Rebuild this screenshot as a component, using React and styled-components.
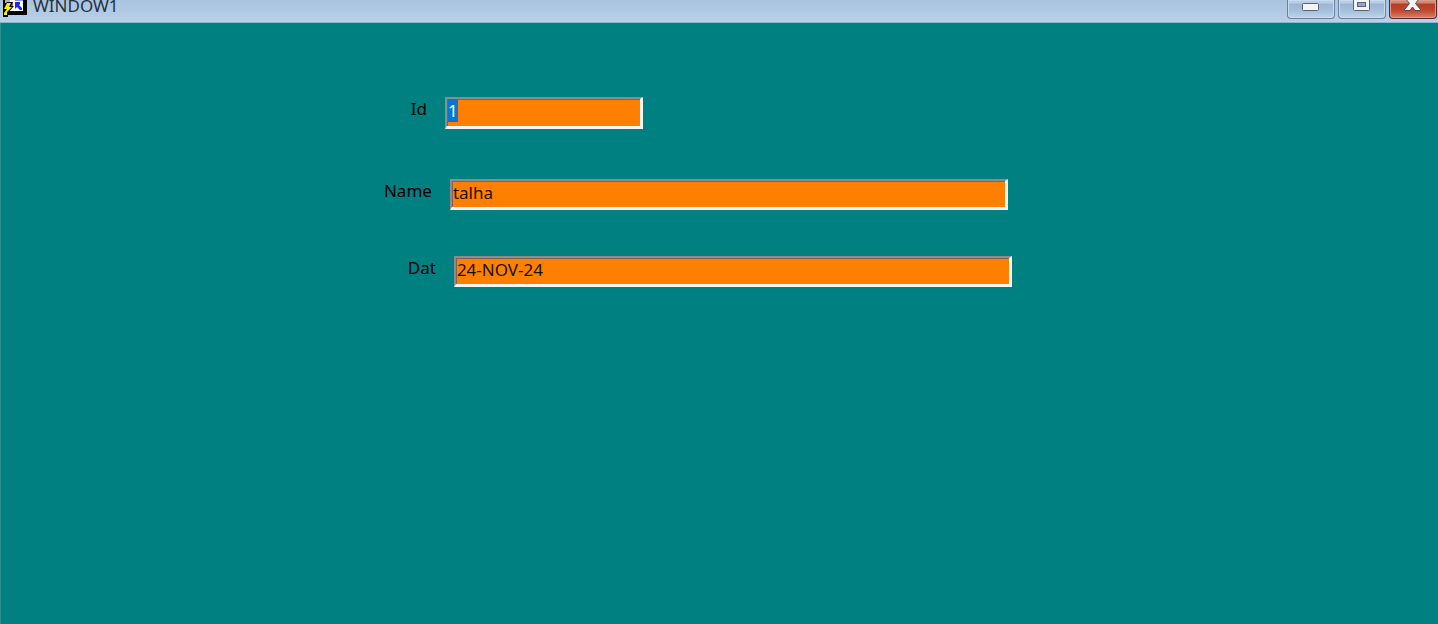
import React, { useEffect, useRef } from "react";
import styled, { createGlobalStyle } from "styled-components";

const GlobalStyle = createGlobalStyle`
  * { box-sizing: border-box; }
  body {
    margin: 0;
    background: #008080;
    color: #000;
    font-family: "Noto Sans", "Open Sans", sans-serif;
    font-size: 17px;
  }
`;

const Window = styled.div`
  min-height: 100vh;
  display: flex;
  flex-direction: column;
  background: #008080;
`;

const TitleBar = styled.header`
  height: 23px;
  display: flex;
  align-items: flex-start;
  justify-content: space-between;
  overflow: hidden;
  background: linear-gradient(#a9c2de, #b9d1ea);
  border-bottom: 1px solid #8fb5c9;
`;

const Caption = styled.div`
  display: flex;
  align-items: flex-start;
  gap: 6px;
  padding-left: 2px;
`;

const Title = styled.h1`
  margin: 0;
  font-size: 17px;
  font-weight: 400;
  line-height: 12px;
  color: #26303c;
`;

const Controls = styled.div`
  display: flex;
  gap: 3px;
  padding-right: 1px;
`;

const ControlButton = styled.button`
  width: 48px;
  height: 19px;
  padding: 0;
  display: flex;
  justify-content: center;
  border: 1px solid ${(p) => (p.$close ? "#5c2430" : "#6c7f9b")};
  border-top: 0;
  border-radius: 0 0 4px 4px;
  background: ${(p) =>
    p.$close
      ? "linear-gradient(#d08a7c 0 3px, #b73c22 4px, #c04a30 11px, #d98367)"
      : "linear-gradient(#b9cee6 0 3px, #9bb6d3 4px, #a6c0dc 11px, #bdd4ec)"};
  box-shadow: inset 0 0 0 1px ${(p) => (p.$close ? "#dd9b8b" : "#c8dbef")};

  svg { display: block; }
`;

const Form = styled.form`
  flex: 1;
  display: flex;
  flex-direction: column;
  padding: 74px 16px 16px 26%;
  border-left: 1px solid #2b9292;
`;

const Row = styled.div`
  display: flex;
  align-items: flex-start;
  gap: 18px;
  padding-left: ${(p) => p.$indent}px;
  margin-bottom: ${(p) => p.$space}px;
`;

const Label = styled.label`
  width: 52px;
  flex: none;
  text-align: right;
  line-height: 23px;
`;

const Field = styled.input`
  width: ${(p) => (p.$short ? 198 : 558)}px;
  min-width: 0;
  height: ${(p) => (p.$short ? 32 : 31)}px;
  padding: 0 0 ${(p) => (p.$short ? 4 : 3)}px 1px;
  border: solid;
  border-width: 2px 3px 3px 2px;
  border-color: #8c8c8c #f4f4f4 #f4f4f4 #8c8c8c;
  border-radius: 0;
  outline: 0;
  background: #ff8000;
  box-shadow: inset 1px 1px #806450;
  color: #1c1000;
  font: inherit;
  line-height: 23px;

  &::selection {
    background: rgba(0, 120, 215, 0.99);
    color: #fff;
  }
`;

const AppIcon = () => (
  <svg width="25" height="17" viewBox="0 0 25 17" aria-hidden="true">
    <path d="M1 0h24v15H1z" fill="#000" />
    <path d="M7 0h14v11H7z" fill="#fff" />
    <path d="M3 0h5v3H3z" fill="#b0b0c8" />
    <path d="M9 2h2v5H9z" fill="#e84860" />
    <path d="M13 0h8v1h-8z" fill="#7f90f0" />
    <path d="M13 2h5v2l-1 1 3 3v2h-2l-3-3-2 2z" fill="#1428ff" />
    <path d="M5 2h6L9 6h3L6 13v4H1v-4l2-3H1V7z" fill="#000" />
    <path d="M5 3h4L7 7h3l-5 5v3H2v-2l3-4H2z" fill="#f4ee18" />
  </svg>
);

const MinimizeIcon = () => (
  <svg width="18" height="14" viewBox="0 0 18 14" aria-hidden="true">
    <rect x="0.5" y="3.5" width="16" height="7" rx="1" fill="#f4f4f4" stroke="#596274" />
  </svg>
);

const RestoreIcon = () => (
  <svg width="18" height="14" viewBox="0 0 18 14" aria-hidden="true">
    <rect x="0.5" y="-4" width="16" height="14.5" rx="1" fill="#f4f4f4" stroke="#596274" />
    <rect x="4.500" y="2.500" width="8" height="4" fill="#8eaaca" stroke="#596274" />
  </svg>
);

const CloseIcon = () => (
  <svg width="20" height="14" viewBox="0 0 20 14" aria-hidden="true">
    <path
      d="M2-3h5l2.500 3L12-3h5v1l-4.500 5.500 5 6v1h-5.500L9.500 7 7 10.500H1.500v-1l5-6L2-2z"
      fill="#f6f3f3"
      stroke="#5e4653"
      strokeLinejoin="round"
    />
  </svg>
);

export default function App() {
  const idField = useRef(null);

  useEffect(() => {
    idField.current.focus();
    idField.current.select();
  }, []);

  return (
    <Window>
      <GlobalStyle />
      <TitleBar>
        <Caption>
          <AppIcon />
          <Title>WINDOW1</Title>
        </Caption>
        <Controls>
          <ControlButton type="button" aria-label="Minimize"><MinimizeIcon /></ControlButton>
          <ControlButton type="button" aria-label="Restore"><RestoreIcon /></ControlButton>
          <ControlButton type="button" aria-label="Close" $close><CloseIcon /></ControlButton>
        </Controls>
      </TitleBar>
      <Form onSubmit={(e) => e.preventDefault()}>
        <Row $indent={0} $space={50}>
          <Label htmlFor="record-id">Id</Label>
          <Field id="record-id" ref={idField} defaultValue="1" $short />
        </Row>
        <Row $indent={5} $space={46}>
          <Label htmlFor="record-name">Name</Label>
          <Field id="record-name" defaultValue="talha" />
        </Row>
        <Row $indent={9} $space={0}>
          <Label htmlFor="record-date">Dat</Label>
          <Field id="record-date" defaultValue="24-NOV-24" />
        </Row>
      </Form>
    </Window>
  );
}
